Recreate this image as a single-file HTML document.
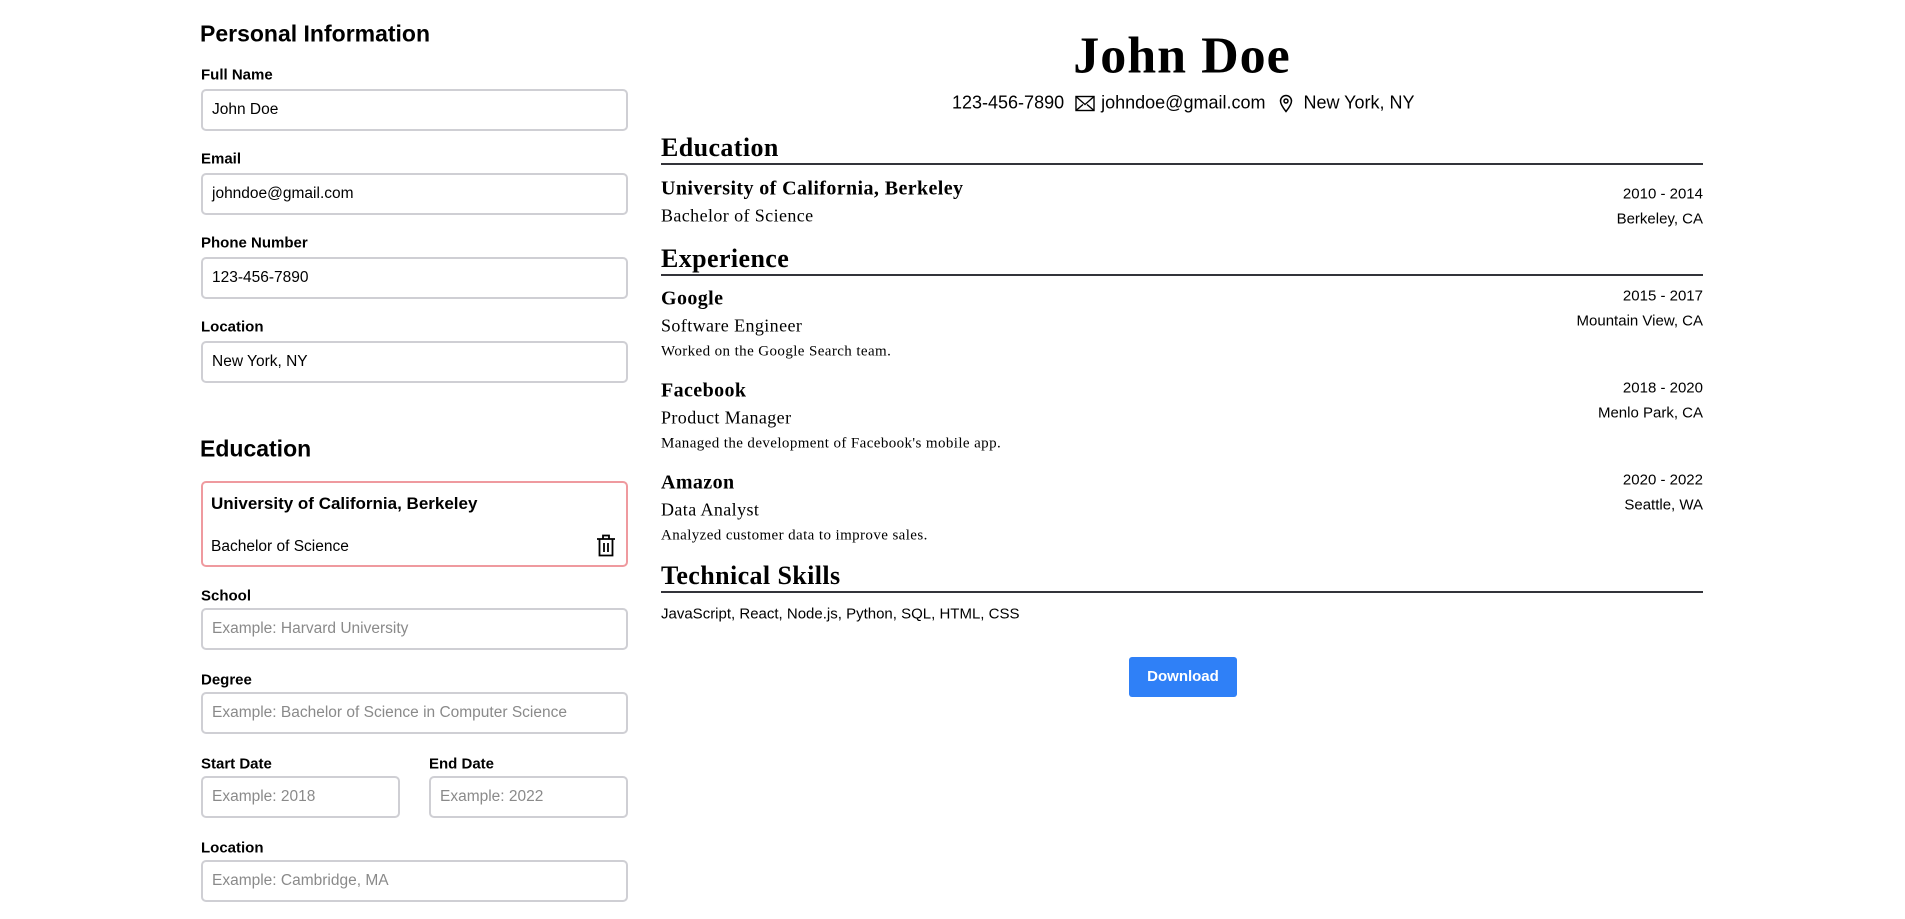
<!DOCTYPE html>
<html><head><meta charset="utf-8"><style>
*{box-sizing:border-box;margin:0;padding:0}
body{width:1905px;height:919px;background:#fff;position:relative;overflow:hidden;font-family:"Liberation Sans",sans-serif;color:#000}
.a{position:absolute;white-space:nowrap}
.lbl{font-size:15px;font-weight:bold;transform:translateY(-50%)}
.in{position:absolute;border:2px solid #cfcfd4;border-radius:5px;height:42px;font-size:15.5px;padding-left:9px;line-height:38px}
.ph{color:#8a8a8a}
.s{font-family:"Liberation Serif",serif;letter-spacing:0.4px}
.c{transform:translateY(-50%)}
.r{right:202px;text-align:right;font-size:15px;transform:translateY(-50%)}
.rule{position:absolute;left:661px;width:1042px;height:2px;background:#33343a}
</style></head><body>
<div class="a c" style="left:200px;top:34px;font-size:23px;font-weight:bold">Personal Information</div>
<div class="a lbl" style="left:201px;top:75px">Full Name</div>
<div class="in" style="left:201px;top:89px;width:427px">John Doe</div>
<div class="a lbl" style="left:201px;top:159px">Email</div>
<div class="in" style="left:201px;top:173px;width:427px">johndoe@gmail.com</div>
<div class="a lbl" style="left:201px;top:243px">Phone Number</div>
<div class="in" style="left:201px;top:257px;width:427px">123-456-7890</div>
<div class="a lbl" style="left:201px;top:327px">Location</div>
<div class="in" style="left:201px;top:341px;width:427px">New York, NY</div>

<div class="a c" style="left:200px;top:449px;font-size:23px;font-weight:bold">Education</div>
<div style="position:absolute;left:201px;top:481px;width:427px;height:86px;border:2px solid #ef9a9f;border-radius:5px"></div>
<div class="a c" style="left:211px;top:504px;font-size:17px;font-weight:bold">University of California, Berkeley</div>
<div class="a c" style="left:211px;top:547px;font-size:15.5px">Bachelor of Science</div>
<svg class="a" style="left:596px;top:534px" width="20" height="23" viewBox="0 0 20 23" fill="none" stroke="#000" stroke-width="1.8"><path d="M1 5h18M7 5V1.5h6V5M3.5 5v16.5h13V5M8 9v9M12 9v9"/></svg>
<div class="a lbl" style="left:201px;top:596px">School</div>
<div class="in ph" style="left:201px;top:608px;width:427px">Example: Harvard University</div>
<div class="a lbl" style="left:201px;top:680px">Degree</div>
<div class="in ph" style="left:201px;top:692px;width:427px">Example: Bachelor of Science in Computer Science</div>
<div class="a lbl" style="left:201px;top:764px">Start Date</div>
<div class="a lbl" style="left:429px;top:764px">End Date</div>
<div class="in ph" style="left:201px;top:776px;width:199px">Example: 2018</div>
<div class="in ph" style="left:429px;top:776px;width:199px">Example: 2022</div>
<div class="a lbl" style="left:201px;top:848px">Location</div>
<div class="in ph" style="left:201px;top:860px;width:427px">Example: Cambridge, MA</div>

<div class="a c" style="left:0;width:2364px;text-align:center;top:56px;font-size:52px;font-weight:bold;font-family:'Liberation Serif',serif;letter-spacing:1px">John Doe</div>
<div class="a c" style="left:952px;top:103px;font-size:18px;display:flex;align-items:center">123-456-7890
<svg style="margin:0 6px 0 11px" width="20" height="16" viewBox="0 0 20 16" fill="none" stroke="#000" stroke-width="1.4"><rect x="1" y="1" width="18" height="14"/><path d="M1 1l9 8 9-8M1 15l7-6M19 15l-7-6"/></svg>johndoe@gmail.com
<svg style="margin:0 10px 0 14px" width="14" height="18" viewBox="0 0 14 18" fill="none" stroke="#000" stroke-width="1.5"><path d="M7 17C3 12 1.5 9 1.5 6.5a5.5 5.5 0 0 1 11 0C12.5 9 11 12 7 17z"/><circle cx="7" cy="6.5" r="2"/></svg>New York, NY</div>

<div class="a s c" style="left:661px;top:148px;font-size:26px;font-weight:bold">Education</div>
<div class="rule" style="top:163px"></div>
<div class="a s c" style="left:661px;top:189px;font-size:20px;font-weight:bold">University of California, Berkeley</div>
<div class="a r" style="top:194px">2010 - 2014</div>
<div class="a s c" style="left:661px;top:216px;font-size:18px">Bachelor of Science</div>
<div class="a r" style="top:219px">Berkeley, CA</div>

<div class="a s c" style="left:661px;top:259px;font-size:26px;font-weight:bold">Experience</div>
<div class="rule" style="top:274px"></div>

<div class="a s c" style="left:661px;top:299px;font-size:20px;font-weight:bold">Google</div>
<div class="a r" style="top:296px">2015 - 2017</div>
<div class="a s c" style="left:661px;top:326px;font-size:18px">Software Engineer</div>
<div class="a r" style="top:321px">Mountain View, CA</div>
<div class="a s c" style="left:661px;top:352px;font-size:15px">Worked on the Google Search team.</div>

<div class="a s c" style="left:661px;top:391px;font-size:20px;font-weight:bold">Facebook</div>
<div class="a r" style="top:388px">2018 - 2020</div>
<div class="a s c" style="left:661px;top:418px;font-size:18px">Product Manager</div>
<div class="a r" style="top:413px">Menlo Park, CA</div>
<div class="a s c" style="left:661px;top:444px;font-size:15px">Managed the development of Facebook's mobile app.</div>

<div class="a s c" style="left:661px;top:483px;font-size:20px;font-weight:bold">Amazon</div>
<div class="a r" style="top:480px">2020 - 2022</div>
<div class="a s c" style="left:661px;top:510px;font-size:18px">Data Analyst</div>
<div class="a r" style="top:505px">Seattle, WA</div>
<div class="a s c" style="left:661px;top:536px;font-size:15px">Analyzed customer data to improve sales.</div>

<div class="a s c" style="left:661px;top:576px;font-size:26px;font-weight:bold">Technical Skills</div>
<div class="rule" style="top:591px"></div>
<div class="a c" style="left:661px;top:614px;font-size:15px">JavaScript, React, Node.js, Python, SQL, HTML, CSS</div>

<div class="a" style="left:1129px;top:657px;width:108px;height:40px;background:#2f80f7;border-radius:3px;color:#fff;font-size:15px;font-weight:bold;text-align:center;line-height:40px">Download</div>
</body></html>
